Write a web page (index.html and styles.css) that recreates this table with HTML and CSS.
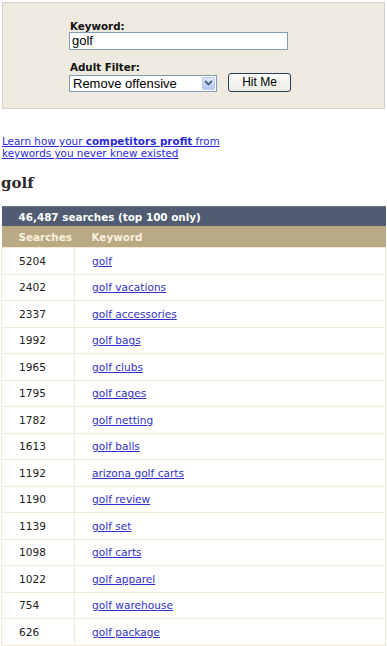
FILE: index.html
```html
<!DOCTYPE html>
<html>
<head>
<meta charset="utf-8">
<link rel="stylesheet" href="styles.css">
</head>
<body>
<div class="search-box">
  <form class="search-form">
    <div class="field">
      <label class="label">Keyword:</label>
      <div class="input">golf</div>
    </div>
    <div class="field">
      <label class="label">Adult Filter:</label>
      <div class="controls">
        <div class="select">
          <span class="select-text">Remove offensive</span>
          <span class="select-btn">
            <svg width="9" height="6" viewBox="0 0 9 6"><path d="M1 1 L4.5 4.5 L8 1" fill="none" stroke="#4d6185" stroke-width="1.8"/></svg>
          </span>
        </div>
        <div class="button">Hit Me</div>
      </div>
    </div>
  </form>
</div>

<p class="promo"><a href="#">Learn how your <b>competitors profit</b> from<br>keywords you never knew existed</a></p>

<h1 class="title">golf</h1>

<table class="results">
  <thead>
    <tr class="summary"><th colspan="2">46,487 searches (top 100 only)</th></tr>
    <tr class="cols"><th class="c1">Searches</th><th class="c2">Keyword</th></tr>
  </thead>
  <tbody>
    <tr><td class="c1">5204</td><td class="c2"><a href="#">golf</a></td></tr>
    <tr><td class="c1">2402</td><td class="c2"><a href="#">golf vacations</a></td></tr>
    <tr><td class="c1">2337</td><td class="c2"><a href="#">golf accessories</a></td></tr>
    <tr><td class="c1">1992</td><td class="c2"><a href="#">golf bags</a></td></tr>
    <tr><td class="c1">1965</td><td class="c2"><a href="#">golf clubs</a></td></tr>
    <tr><td class="c1">1795</td><td class="c2"><a href="#">golf cages</a></td></tr>
    <tr><td class="c1">1782</td><td class="c2"><a href="#">golf netting</a></td></tr>
    <tr><td class="c1">1613</td><td class="c2"><a href="#">golf balls</a></td></tr>
    <tr><td class="c1">1192</td><td class="c2"><a href="#">arizona golf carts</a></td></tr>
    <tr><td class="c1">1190</td><td class="c2"><a href="#">golf review</a></td></tr>
    <tr><td class="c1">1139</td><td class="c2"><a href="#">golf set</a></td></tr>
    <tr><td class="c1">1098</td><td class="c2"><a href="#">golf carts</a></td></tr>
    <tr><td class="c1">1022</td><td class="c2"><a href="#">golf apparel</a></td></tr>
    <tr><td class="c1">754</td><td class="c2"><a href="#">golf warehouse</a></td></tr>
    <tr><td class="c1">626</td><td class="c2"><a href="#">golf package</a></td></tr>
  </tbody>
</table>
</body>
</html>
```

FILE: styles.css
```css
html, body {
  margin: 0;
  padding: 0;
  background: #ffffff;
}
body {
  font-family: "DejaVu Sans", Verdana, sans-serif;
  font-size: 11px;
  color: #222;
  overflow: hidden;
}
.search-box {
  margin: 2px 2px 0 2px;
  height: 105px;
  background: #eeeadf;
  border: 1px solid #d5d1c7;
}
.search-form {
  padding: 17px 0 0 66px;
  display: flex;
  flex-direction: column;
  gap: 11px;
}
.field {
  display: flex;
  flex-direction: column;
}
.label {
  font-weight: bold;
  font-size: 10.3px;
  line-height: 12px;
  color: #111;
  padding-left: 1px;
}
.input {
  width: 215px;
  height: 16px;
  border: 1px solid #7f9db9;
  background: #fff;
  font-family: "Liberation Sans", Arial, sans-serif;
  font-size: 13px;
  line-height: 16px;
  padding: 0 0 0 2px;
  color: #000;
}
.controls {
  display: flex;
  align-items: center;
  gap: 11px;
}
.select {
  width: 146px;
  height: 15px;
  border: 1px solid #7f9db9;
  background: #fff;
  display: flex;
  align-items: center;
  justify-content: space-between;
  margin-top: 1px;
}
.select-text {
  font-family: "Liberation Sans", Arial, sans-serif;
  font-size: 13px;
  padding-left: 3px;
  color: #000;
}
.select-btn {
  width: 13px;
  height: 13px;
  margin-right: 1px;
  background: linear-gradient(#dfe8fb, #b4c8f5);
  border: 1px solid #b7c9f0;
  border-radius: 2px;
  box-sizing: border-box;
  display: flex;
  align-items: center;
  justify-content: center;
}
.button {
  width: 61px;
  height: 17px;
  border: 1px solid #2b3d5c;
  border-radius: 3px;
  background: linear-gradient(#fbfbf8, #ecebe4);
  font-family: "Liberation Sans", Arial, sans-serif;
  font-size: 12px;
  line-height: 17px;
  text-align: center;
  color: #000;
}
.promo {
  margin: 26px 0 0 2px;
  line-height: 12px;
  font-size: 10.4px;
}
.promo a {
  color: #2b2bd8;
}
.title {
  margin: 14px 0 0 1px;
  font-family: "DejaVu Serif", Georgia, serif;
  font-size: 15px;
  font-weight: bold;
  color: #2b2b2b;
  line-height: 20px;
}
.results {
  margin: 13px 0 0 1px;
  width: 385px;
  border-collapse: collapse;
  font-size: 10.6px;
}
.results th {
  text-align: left;
  font-weight: bold;
  padding: 0;
}
.summary th {
  background: #505c71;
  color: #fff;
  height: 19px;
  padding-left: 17px;
  font-size: 10.4px;
  border-top: 1px solid #6b7485;
}
.cols th {
  background: #b9a984;
  color: #f8f1dc;
  height: 21px;
  font-size: 10.4px;
}
.cols .c1 { padding-left: 17px; }
.cols .c2 { padding-left: 17px; }
.results td {
  height: 25.5px;
  border: 1px solid #f0ead9;
  padding: 0;
  color: #222;
}
.results td.c1 {
  width: 55px;
  padding-left: 17px;
}
.results td.c2 {
  padding-left: 17px;
}
.results td a {
  color: #3131c9;
}
```
